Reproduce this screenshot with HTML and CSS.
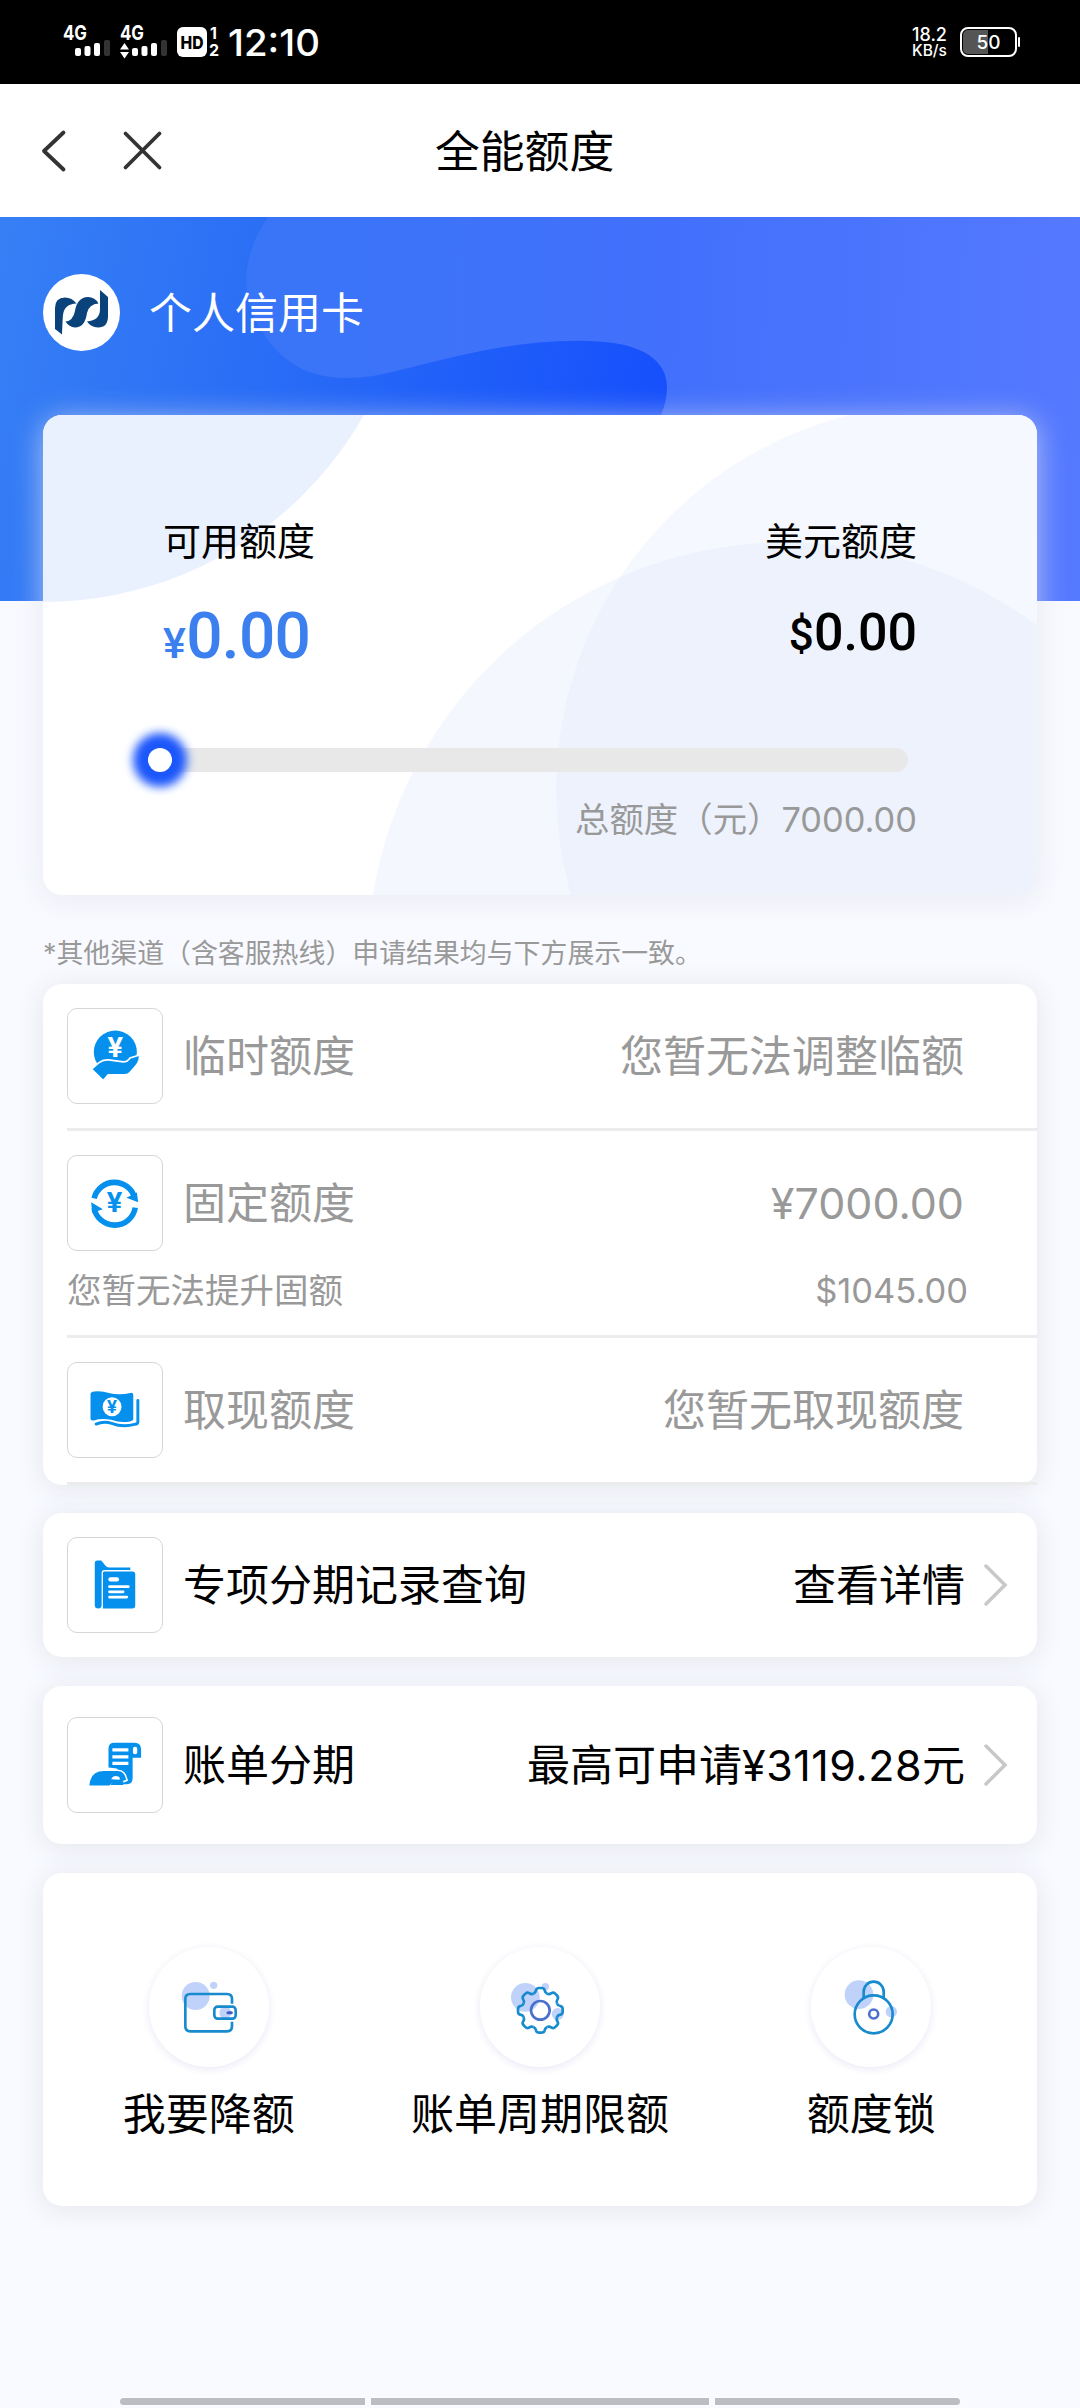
FILE: index.html
```html
<!DOCTYPE html>
<html lang="zh-CN">
<head>
<meta charset="utf-8">
<title>全能额度</title>
<link rel="stylesheet" href="styles.css">
</head>
<body>
<div class="screen">
  <header class="status">
    <svg class="status-left" width="290" height="50" viewBox="60 15 290 50" fill="#fff">
      <text x="63" y="40" font-size="20" font-weight="700" textLength="24" lengthAdjust="spacingAndGlyphs">4G</text>
      <rect x="75" y="48" width="6" height="8" rx="2"/><rect x="84.500" y="46" width="6" height="10" rx="2"/><rect x="94" y="43" width="6" height="13" rx="2"/><rect x="104" y="40" width="6" height="16" rx="2" fill="#333"/>
      <text x="120" y="40" font-size="20" font-weight="700" textLength="24" lengthAdjust="spacingAndGlyphs">4G</text>
      <path d="M124.500 43l4.500 6.500h-9zM124.500 58.500l4.500-6.500h-9z"/>
      <rect x="132" y="48" width="6" height="8" rx="2"/><rect x="141.500" y="46" width="6" height="10" rx="2"/><rect x="151" y="43" width="6" height="13" rx="2"/><rect x="161" y="40" width="6" height="16" rx="2" fill="#333"/>
      <rect x="177" y="27" width="30" height="30" rx="6"/>
      <text x="180.500" y="48.500" font-size="18" font-weight="800" fill="#000" textLength="23" lengthAdjust="spacingAndGlyphs">HD</text>
      <text x="210" y="38.500" font-size="16" font-weight="700">1</text>
      <text x="209" y="56" font-size="16" font-weight="700">2</text>
      <text x="228" y="55.500" font-size="37" font-weight="500" textLength="92" lengthAdjust="spacingAndGlyphs">12:10</text>
    </svg>
    <div class="status-right">
      <div class="speed"><span>18.2</span><span>KB/s</span></div>
      <div class="battery"><span>50</span></div>
    </div>
  </header>

  <nav class="nav">
    <svg class="nav-icons" width="130" height="44" viewBox="38 128 130 44" fill="none" stroke="#333" stroke-width="3.800" stroke-linecap="round" stroke-linejoin="round">
      <path d="M63.500 131.500L44 150l19.500 18.500M125.500 132.500l34 34M159.500 132.500l-34 34"/>
    </svg>
    <h1>全能额度</h1>
  </nav>

  <main>
    <section class="hero">
      <svg class="hero-bg" width="1080" height="384" viewBox="0 0 1080 384">
        <defs>
          <linearGradient id="deep" gradientUnits="userSpaceOnUse" x1="0" y1="60" x2="670" y2="200"><stop offset="0" stop-color="#367ff5"/><stop offset=".4" stop-color="#2a6df6"/><stop offset="1" stop-color="#164ffc"/></linearGradient>
          <linearGradient id="light" gradientUnits="userSpaceOnUse" x1="246" y1="200" x2="1080" y2="230"><stop offset="0" stop-color="#3975f7"/><stop offset=".5" stop-color="#4270fc"/><stop offset="1" stop-color="#5579ff"/></linearGradient>
        </defs>
        <rect width="1080" height="384" fill="url(#deep)"/>
        <path d="M268 0C240 42 238 84 268 123C288 150 315 161 345 161C366 161 380 158 400 153C460 138 520 122 588 124C645 125 667 145 667 170Q667 184 661 198V384H1080V0z" fill="url(#light)"/>
      </svg>
      <div class="owner">
        <svg class="logo" width="77" height="77" viewBox="0 0 77 77">
          <circle cx="38.500" cy="38.500" r="38.500" fill="#fff"/>
          <path fill="#0a427b" d="M19 60.500L12 55V34Q12 23.500 22 23.500Q29 23.500 33.500 29.500Q21 30 20 41Q19.500 46 19 60.500zM22.500 47.500Q30 47 32 37Q34 23.500 45 23Q52 23 55.500 29.500Q46 30 44 39Q42 53.500 32 53.500Q26 53 22.500 47.500zM57 16l8 7v19Q65 53.500 55 53.500Q47.500 53 44 47.500Q57 46.500 57 35z"/>
        </svg>
        <span>个人信用卡</span>
      </div>

      <div class="card quota">
        <svg class="quota-bg" width="994" height="480" viewBox="43 415 994 480">
          <circle cx="43" cy="233" r="369" fill="#eaf1fe"/>
          <circle cx="941.800" cy="789.500" r="385.500" fill="#f5f8fe"/>
          <circle cx="786.600" cy="961.500" r="419" fill="#dce6fc" fill-opacity=".3"/>
        </svg>
        <div class="amounts">
          <div class="cny"><span class="cap">可用额度</span><b><small>¥</small>0.00</b></div>
          <div class="usd"><span class="cap">美元额度</span><b><small>$</small>0.00</b></div>
        </div>
        <div class="track"><i class="knob"></i></div>
        <p class="total">总额度（元）7000.00</p>
      </div>
    </section>

    <p class="note">*其他渠道（含客服热线）申请结果均与下方展示一致。</p>

    <section class="card list muted">
      <div class="item">
        <div class="row">
          <svg class="icon" viewBox="0 0 288 288" fill="#0590ee">
            <circle cx="145" cy="132" r="66"/>
            <path d="M72 184L94 165Q108 154 124 156L170 162Q182 162 190 150L219 141Q221 160 208 174L190 195Q184 202 174 202H123L108 219z" stroke="#fff" stroke-width="5"/>
            <text x="120" y="148" font-size="84" font-weight="700" fill="#fff" textLength="49" lengthAdjust="spacingAndGlyphs">¥</text>
          </svg>
          <span class="name">临时额度</span><span class="value">您暂无法调整临额</span>
        </div>
      </div>
      <div class="item">
        <div class="row">
          <svg class="icon" viewBox="0 0 288 288" fill="#0590ee">
            <g fill="none" stroke="#0590ee" stroke-width="17"><path d="M80 130A64 64 0 0 1 204 128"/><path d="M206 158A64 64 0 0 1 80 160"/></g>
            <path d="M179 128l36 14-4-30zM107 163l-36-21 3 32z"/>
            <text x="118" y="173" font-size="84" font-weight="700" textLength="49" lengthAdjust="spacingAndGlyphs">¥</text>
          </svg>
          <span class="name">固定额度</span><span class="value">¥7000.00</span>
        </div>
        <div class="sub"><span>您暂无法提升固额</span><span>$1045.00</span></div>
      </div>
      <div class="item">
        <div class="row">
          <svg class="icon" viewBox="0 0 288 288" fill="#0590ee">
            <path d="M69 95Q70 88 80 87Q104 84 125 92Q158 100 194 91Q200 91 200 98V171Q200 178 190 179Q163 185 132 174Q104 168 79 176Q69 178 69 171z"/>
            <path d="M214 115V182Q213 187 204 188Q168 198 134 185Q110 177 86 187" fill="none" stroke="#0590ee" stroke-width="9" stroke-linecap="round"/>
            <circle cx="135" cy="134" r="29" fill="#fff"/>
            <text x="119" y="154" font-size="52" font-weight="700" textLength="32" lengthAdjust="spacingAndGlyphs">¥</text>
          </svg>
          <span class="name">取现额度</span><span class="value">您暂无取现额度</span>
        </div>
      </div>
    </section>

    <section class="card entry records">
      <div class="row">
        <svg class="icon" viewBox="0 0 288 288" fill="#0590ee">
          <path d="M82 77Q82 69 90 69H102L115 85Q119 90 126 90H191V98H112Q103 98 103 107V207Q102 216 93 216Q82 216 82 205zM107 107Q107 103 112 103H198Q206 103 206 111V207Q206 216 197 216H107z"/>
          <g fill="none" stroke="#fff" stroke-width="8" stroke-linecap="round"><path d="M130 127h20" stroke-width="13"/><path d="M127 149h58M127 165h42M127 181h53"/></g>
        </svg>
        <span class="name">专项分期记录查询</span><span class="value">查看详情</span>
        <svg class="chevron" width="24" height="44" viewBox="0 0 24 44"><path d="M2 3l19 19L2 41"/></svg>
      </div>
    </section>

    <section class="card entry bills">
      <div class="row">
        <svg class="icon" viewBox="0 0 288 288" fill="#0590ee">
          <path d="M124 152V94Q124 76 142 76H204Q224 76 224 96V122H198V184Q198 203 180 203H145Q170 185 150 155z"/>
          <g fill="none" stroke="#fff"><path d="M136 98h49M136 119h49M136 139h49" stroke-width="10"/></g>
          <rect x="199" y="88" width="13" height="23" rx="6" fill="#fff"/>
          <path d="M63 209Q65 160 110 160H152Q176 160 181 191Q166 199 139 199L128 209z" stroke="#fff" stroke-width="5"/>
          <path d="M132 188Q140 172 157 181Q160 186 158 189z" fill="#fff"/>
          <path d="M139 193H158Q174 190 169 205H130z"/>
        </svg>
        <span class="name">账单分期</span><span class="value">最高可申请<span class="sum">¥3119.28</span>元</span>
        <svg class="chevron" width="24" height="44" viewBox="0 0 24 44"><path d="M2 3l19 19L2 41"/></svg>
      </div>
    </section>

    <section class="card actions">
      <div class="action">
        <svg class="disc" viewBox="145 82 360 360" fill="none" stroke="#188bcf" stroke-width="8">
          <g fill="#5c89f3" fill-opacity=".38" stroke="none"><circle cx="285" cy="229" r="42"/><circle cx="339" cy="197" r="11"/><circle cx="374" cy="279" r="18"/></g>
          <path d="M394 252V238Q394 223 379 223H269Q254 223 254 238V320Q254 335 269 335H379Q394 335 394 320V306"/>
          <rect x="341" y="261" width="64" height="36" rx="10"/><path d="M382 279h10" stroke="#3c5ec4" stroke-width="9" stroke-linecap="round"/>
        </svg>
        <span>我要降额</span>
      </div>
      <div class="action">
        <svg class="disc" viewBox="1143 82 360 360" fill="none" stroke="#188bcf" stroke-width="8">
          <g fill="#5c89f3" fill-opacity=".38" stroke="none"><circle cx="1279" cy="233" r="43"/><circle cx="1339" cy="201" r="11"/><circle cx="1376" cy="283" r="18"/></g>
          <defs><path id="tooth" d="M-20.700-49.900C-16.500-51.600-14-54-13-60Q-11-67-4-67H4Q11-67 13-60C14-54 16.500-51.600 20.700-49.900"/></defs>
          <g transform="translate(1324 272)">
            <use href="#tooth"/><use href="#tooth" transform="rotate(45)"/><use href="#tooth" transform="rotate(90)"/><use href="#tooth" transform="rotate(135)"/><use href="#tooth" transform="rotate(180)"/><use href="#tooth" transform="rotate(225)"/><use href="#tooth" transform="rotate(270)"/><use href="#tooth" transform="rotate(315)"/>
            <circle r="28" stroke="#4a72cd"/>
          </g>
        </svg>
        <span>账单周期限额</span>
      </div>
      <div class="action">
        <svg class="disc" viewBox="755 82 360 360" fill="none" stroke="#188bcf" stroke-width="8">
          <g fill="#5c89f3" fill-opacity=".38" stroke="none"><circle cx="899" cy="225" r="43"/><circle cx="996" cy="276" r="17"/></g>
          <circle cx="943" cy="284" r="57"/><path d="M913 234V216A30 30 0 0 1 973 216V234"/><circle cx="943" cy="283" r="13.500" stroke="#4a72cd"/>
        </svg>
        <span>额度锁</span>
      </div>
    </section>
  </main>

  <footer class="gesture"><i></i><i></i><i></i></footer>
</div>
</body>
</html>
```

FILE: styles.css
```css
* { box-sizing: border-box; }
body { margin: 0; background: #f8faff; }
.screen {
  width: 1080px; height: 2408px; overflow: hidden;
  display: flex; flex-direction: column;
  font-family: Inter, "Noto Sans CJK SC", sans-serif;
  font-size: 43px; line-height: 60px; color: #000;
}
p, h1 { margin: 0; font-weight: 400; }
svg { display: block; flex: none; }

.status { height: 84px; background: #000; color: #fff; display: flex; justify-content: space-between; padding: 15px 63px 0 60px; }
.status-left { overflow: visible; }
.status-right { display: flex; gap: 12px; padding-top: 12px; }
.speed { display: flex; flex-direction: column; width: 36px; font-size: 18px; line-height: 15px; white-space: nowrap; font-weight: 500; }
.speed span:last-child { font-size: 15.500px; line-height: 17px; }
.battery {
  position: relative; width: 57px; height: 30px; border: 2.500px solid #fff; border-radius: 8px;
  background: linear-gradient(90deg, #555 50%, #000 50%); background-clip: content-box; padding: 1px;
  font-size: 19px; line-height: 25px; font-weight: 500; text-align: center;
}
.battery::after { content: ""; position: absolute; right: -5px; top: 8px; width: 2px; height: 10px; background: #fff; border-radius: 1px; }

.nav { height: 133px; background: #fff; display: flex; align-items: center; padding-left: 38px; }
.nav h1 { width: 180px; margin: 2px 0 0 267px; font-size: 44.800px; white-space: nowrap; }

.hero { position: relative; height: 384px; }
.hero-bg { position: absolute; left: 0; top: 0; }
.owner { position: relative; display: flex; align-items: center; gap: 29px; padding: 57px 0 0 43px; height: 134px; color: #fff; }
.card { margin: 0 43px; background: #fff; border-radius: 19px; box-shadow: 0 3px 26px 2px #e6e8ee; }
.quota { position: relative; height: 480px; margin-top: 64px; padding: 96px 120px 0; overflow: hidden; }
.hero .quota { box-shadow: 0 4px 30px rgba(226, 228, 236, .7); }
.quota-bg { position: absolute; left: 0; top: 0; }
.amounts, .track, .total { position: relative; }
.amounts { display: flex; justify-content: space-between; height: 237px; }
.cny, .usd { display: flex; flex-direction: column; }
.usd { align-items: flex-end; }
.cap { font-size: 38px; }
.cny b, .usd b { font-family: Roboto, Inter, sans-serif; }
.cny b { color: #3b80ee; font-size: 64px; font-weight: 500; line-height: 76px; letter-spacing: -.7px; margin-top: 28px; }
.cny small { font-size: 43px; font-weight: 500; margin-right: 1px; }
.usd b { font-size: 52px; font-weight: 500; line-height: 60px; margin: 32px 0 0; }
.usd small { font-size: 44px; }
.track { width: 749px; height: 24px; margin-left: -4px; background: #e8e8e8; border-radius: 12px; }
.knob { display: block; width: 24px; height: 24px; border-radius: 50%; background: #fff; box-shadow: 0 0 10px 15px #1c57fb; margin-left: -11px; }
.total { margin-top: 18px; text-align: right; font-size: 34.400px; color: #999; }

.note { margin: 329px 0 0 43px; height: 54px; font-size: 26.900px; line-height: 46px; color: #999; }

.row { display: flex; align-items: center; padding-left: 24px; }
.icon { width: 96px; height: 96px; border: 1px solid #d6d6d8; border-radius: 10px; }
.name { margin-left: 20px; }
.value { margin-left: auto; margin-right: 73px; }
.sum { letter-spacing: .5px; }
.muted { color: #999; }
.item { position: relative; padding: 24px 0 27px; }
.item::after { content: ""; position: absolute; left: 24px; right: 0; bottom: 0; height: 3px; background: #ececec; }
.sub { display: flex; justify-content: space-between; padding: 10px 69px 0 24px; height: 84px; font-size: 34.500px; margin-bottom: -24px; }

.list { height: 501px; }
.entry .value { margin-right: 19px; }
.chevron { margin-right: 29px; fill: none; stroke: #c8c8c8; stroke-width: 3.500; stroke-linecap: round; }
.records { margin-top: 28px; height: 144px; padding-top: 24px; }
.bills { margin-top: 29px; height: 158px; padding-top: 31px; }

.actions { margin-top: 29px; height: 333px; padding-top: 74px; display: grid; grid-template-columns: repeat(3, 1fr); }
.action { display: flex; flex-direction: column; align-items: center; gap: 17px; }
.disc { width: 120px; height: 120px; border-radius: 50%; box-shadow: 0 2px 8px #e8e8f6; }
.action span { line-height: 60px; }

.gesture { margin-top: auto; height: 10px; display: flex; gap: 6px; padding: 0 120px; }
.gesture i { width: 245px; height: 7px; background: #bbbdc3; box-shadow: 0 0 0 1px #fdfdff; }
.gesture i:nth-child(2) { width: 338px; }
.gesture i:first-child { border-radius: 4px 0 0 4px; }
.gesture i:last-child { border-radius: 0 4px 4px 0; }
```
